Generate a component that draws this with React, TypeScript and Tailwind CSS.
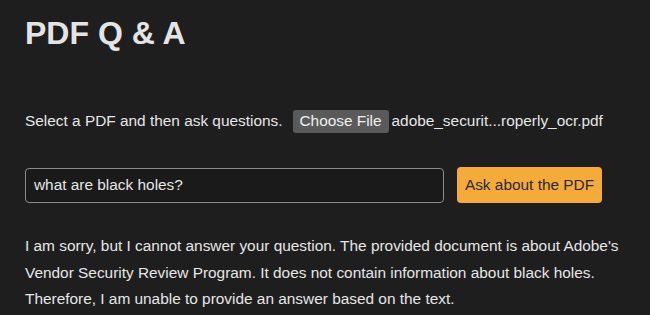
export default function App() {
  return (
    <div className="min-h-screen w-full bg-[#1e1e1e] text-[#e6e6e6] px-[25px] pt-[13px] font-['Liberation_Sans',Arial,sans-serif]">
      <h1 className="text-[32px] font-bold leading-[40px] text-[#e4e4e4]">PDF Q &amp; A</h1>

      <div className="mt-[56px] flex items-center h-[24px] text-[15.4px] whitespace-nowrap">
        <span>Select a PDF and then ask questions.</span>
        <span className="ml-[10px] h-[23px] w-[96px] shrink-0 flex items-center justify-center rounded-[3px] bg-[#5a5a5a] text-[#f0f0f0]">
          Choose File
        </span>
        <span className="ml-[3px]">adobe_securit...roperly_ocr.pdf</span>
      </div>

      <div className="mt-[34px] flex items-center gap-[13px]">
        <input
          className="w-[419px] h-[35px] rounded-[4px] border border-[#8a8a92] bg-[#1a1a1a] px-[8px] text-[15.4px] text-[#e6e6e6] outline-none"
          defaultValue="what are black holes?"
        />
        <button className="h-[36px] w-[145px] rounded-[4px] bg-[#f6aa37] text-[15.4px] text-[#2a2a2a] whitespace-nowrap">
          Ask about the PDF
        </button>
      </div>

      <p className="mt-[30px] text-[15.4px] leading-[26.5px] text-[#e6e6e6]">
        I am sorry, but I cannot answer your question. The provided document is about Adobe's Vendor Security
        Review Program. It does not contain information about black holes. Therefore, I am unable to provide an
        answer based on the text.
      </p>
    </div>
  );
}
